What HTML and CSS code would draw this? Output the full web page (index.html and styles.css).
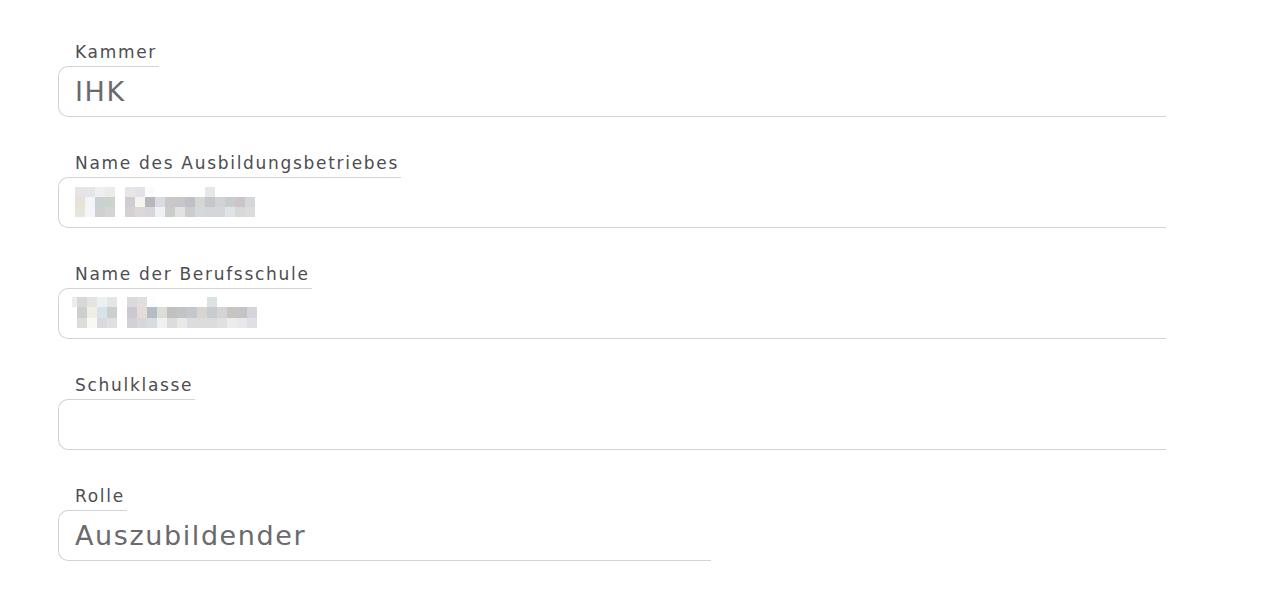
FILE: index.html
```html
<!DOCTYPE html>
<html lang="de">
<head>
<meta charset="utf-8">
<title>Ausbildung</title>
<link rel="stylesheet" href="styles.css">
</head>
<body>
<div class="form">
  <div class="field">
    <div class="head"><div class="label">Kammer</div><div class="cap"></div></div>
    <div class="body"><div class="value">IHK</div></div>
  </div>
  <div class="field">
    <div class="head"><div class="label">Name des Ausbildungsbetriebes</div><div class="cap"></div></div>
    <div class="body">
      <svg class="mosaic m1" width="180" height="30" viewBox="0 0 180 30">
        <rect x="0" y="0" width="10" height="10" fill="#e6e4e4"/><rect x="10" y="0" width="10" height="10" fill="#e4e5e8"/><rect x="20" y="0" width="10" height="10" fill="#eeefee"/><rect x="30" y="0" width="10" height="10" fill="#eaeceb"/>
        <rect x="50" y="0" width="10" height="10" fill="#e8e4e8"/><rect x="60" y="0" width="10" height="10" fill="#e4e2e6"/><rect x="70" y="0" width="10" height="10" fill="#fafbfd"/><rect x="130" y="0" width="10" height="10" fill="#e6e8e8"/>
        <rect x="0" y="10" width="10" height="10" fill="#e6e2d8"/><rect x="10" y="10" width="10" height="10" fill="#f2f4f8"/><rect x="20" y="10" width="10" height="10" fill="#ccd0d0"/><rect x="30" y="10" width="10" height="10" fill="#ccd2cc"/>
        <rect x="50" y="10" width="10" height="10" fill="#d0ccd4"/><rect x="60" y="10" width="10" height="10" fill="#f6f4ee"/><rect x="70" y="10" width="10" height="10" fill="#b8b8bc"/><rect x="80" y="10" width="10" height="10" fill="#d8dce2"/><rect x="90" y="10" width="10" height="10" fill="#c8c8c8"/><rect x="100" y="10" width="10" height="10" fill="#c8c6c8"/><rect x="110" y="10" width="10" height="10" fill="#c0c0c8"/><rect x="120" y="10" width="10" height="10" fill="#d4d6d4"/><rect x="130" y="10" width="10" height="10" fill="#c4c8cc"/><rect x="140" y="10" width="10" height="10" fill="#d0d2d4"/><rect x="150" y="10" width="10" height="10" fill="#c8cccf"/><rect x="160" y="10" width="10" height="10" fill="#ccc4c6"/><rect x="170" y="10" width="10" height="10" fill="#d4d6da"/>
        <rect x="0" y="20" width="10" height="10" fill="#e8e6dc"/><rect x="10" y="20" width="10" height="10" fill="#f4f6f8"/><rect x="20" y="20" width="10" height="10" fill="#d0d0d0"/><rect x="30" y="20" width="10" height="10" fill="#d4d6d6"/>
        <rect x="50" y="20" width="10" height="10" fill="#d4d0d4"/><rect x="60" y="20" width="10" height="10" fill="#dcd8da"/><rect x="70" y="20" width="10" height="10" fill="#d8d6da"/><rect x="80" y="20" width="10" height="10" fill="#eef2f6"/><rect x="90" y="20" width="10" height="10" fill="#cacccc"/><rect x="100" y="20" width="10" height="10" fill="#e2e2e0"/><rect x="110" y="20" width="10" height="10" fill="#ccccce"/><rect x="120" y="20" width="10" height="10" fill="#d4d8dc"/><rect x="130" y="20" width="10" height="10" fill="#d4d6da"/><rect x="140" y="20" width="10" height="10" fill="#d4d6da"/><rect x="150" y="20" width="10" height="10" fill="#e0e4e6"/><rect x="160" y="20" width="10" height="10" fill="#d8d8d6"/><rect x="170" y="20" width="10" height="10" fill="#dcdcdc"/>
      </svg>
    </div>
  </div>
  <div class="field">
    <div class="head"><div class="label">Name der Berufsschule</div><div class="cap"></div></div>
    <div class="body">
      <svg class="mosaic m2" width="185" height="31" viewBox="0 0 185 31">
        <rect x="0" y="0" width="5" height="10" fill="#f0ece8"/>
        <rect x="5" y="0" width="10" height="10" fill="#d8d8d8"/><rect x="15" y="0" width="10" height="10" fill="#e4e4e4"/><rect x="25" y="0" width="10" height="10" fill="#ecf0f2"/><rect x="35" y="0" width="10" height="10" fill="#e4e6e6"/>
        <rect x="55" y="0" width="10" height="10" fill="#dcd8dc"/><rect x="65" y="0" width="10" height="10" fill="#e0dfe0"/><rect x="75" y="0" width="10" height="10" fill="#fcfdff"/><rect x="135" y="0" width="10" height="10" fill="#dce2e4"/>
        <rect x="5" y="10" width="10" height="11" fill="#ccd0cc"/><rect x="15" y="10" width="10" height="11" fill="#f0ece8"/><rect x="25" y="10" width="10" height="11" fill="#d8e2e8"/><rect x="35" y="10" width="10" height="11" fill="#ccd0cc"/>
        <rect x="55" y="10" width="10" height="11" fill="#ccc8d0"/><rect x="65" y="10" width="10" height="11" fill="#e4dcd8"/><rect x="75" y="10" width="10" height="11" fill="#b4bcc4"/><rect x="85" y="10" width="10" height="11" fill="#dcdcd8"/><rect x="95" y="10" width="10" height="11" fill="#c0c0c0"/><rect x="105" y="10" width="10" height="11" fill="#c0c4c4"/><rect x="115" y="10" width="10" height="11" fill="#c4c8cc"/><rect x="125" y="10" width="10" height="11" fill="#d8d4d0"/><rect x="135" y="10" width="10" height="11" fill="#c8ccd0"/><rect x="145" y="10" width="10" height="11" fill="#d4d4d4"/><rect x="155" y="10" width="10" height="11" fill="#c8c4c0"/><rect x="165" y="10" width="10" height="11" fill="#c4c4c4"/><rect x="175" y="10" width="10" height="11" fill="#d4d4dc"/>
        <rect x="5" y="21" width="10" height="10" fill="#dcdcd8"/><rect x="15" y="21" width="10" height="10" fill="#faf8f4"/><rect x="25" y="21" width="10" height="10" fill="#d8dadc"/><rect x="35" y="21" width="10" height="10" fill="#e0e0e4"/>
        <rect x="55" y="21" width="10" height="10" fill="#d4d0d8"/><rect x="65" y="21" width="10" height="10" fill="#d8d8dc"/><rect x="75" y="21" width="10" height="10" fill="#d8dce0"/><rect x="85" y="21" width="10" height="10" fill="#f0f0ee"/><rect x="95" y="21" width="10" height="10" fill="#dcdcdc"/><rect x="105" y="21" width="10" height="10" fill="#e8e8e6"/><rect x="115" y="21" width="10" height="10" fill="#dcdce0"/><rect x="125" y="21" width="10" height="10" fill="#dcdcdc"/><rect x="135" y="21" width="10" height="10" fill="#dcdcdc"/><rect x="145" y="21" width="10" height="10" fill="#e0e0e0"/><rect x="155" y="21" width="10" height="10" fill="#ecece8"/><rect x="165" y="21" width="10" height="10" fill="#e8e8ec"/><rect x="175" y="21" width="10" height="10" fill="#e0e0e4"/>
      </svg>
    </div>
  </div>
  <div class="field">
    <div class="head"><div class="label">Schulklasse</div><div class="cap"></div></div>
    <div class="body"></div>
  </div>
  <div class="field field-short">
    <div class="head"><div class="label">Rolle</div><div class="cap"></div></div>
    <div class="body"><div class="value">Auszubildender</div></div>
  </div>
</div>
</body>
</html>
```
FILE: styles.css
```css
html, body {
  margin: 0;
  padding: 0;
  background: #ffffff;
}

body {
  font-family: "DejaVu Sans", Verdana, sans-serif;
}

.form {
  display: flex;
  flex-direction: column;
  gap: 36px;
  padding: 42px 0 0 58px;
}

.field {
  width: 1108px;
  display: flex;
  flex-direction: column;
}

.field-short {
  width: 653px;
}

.head {
  width: fit-content;
}

.label {
  font-size: 17px;
  line-height: 20px;
  letter-spacing: 1.7px;
  color: #4d4d52;
  padding: 0 2px 4px 17px;
  white-space: nowrap;
}

.cap {
  height: 10px;
  border-top: 1px solid #d3d3d3;
  border-left: 1px solid #d3d3d3;
  border-top-left-radius: 10px;
}

.body {
  height: 39px;
  border-left: 1px solid #d3d3d3;
  border-bottom: 1px solid #d3d3d3;
  border-bottom-left-radius: 10px;
}

.value {
  font-size: 27px;
  line-height: 30px;
  letter-spacing: 1.6px;
  color: #6a6a6e;
  padding-left: 16px;
  white-space: nowrap;
}

.mosaic {
  display: block;
  margin-left: 16px;
}

.m1 {
  margin-top: -1px;
}

.m2 {
  margin-top: -2px;
  margin-left: 13px;
}
```
